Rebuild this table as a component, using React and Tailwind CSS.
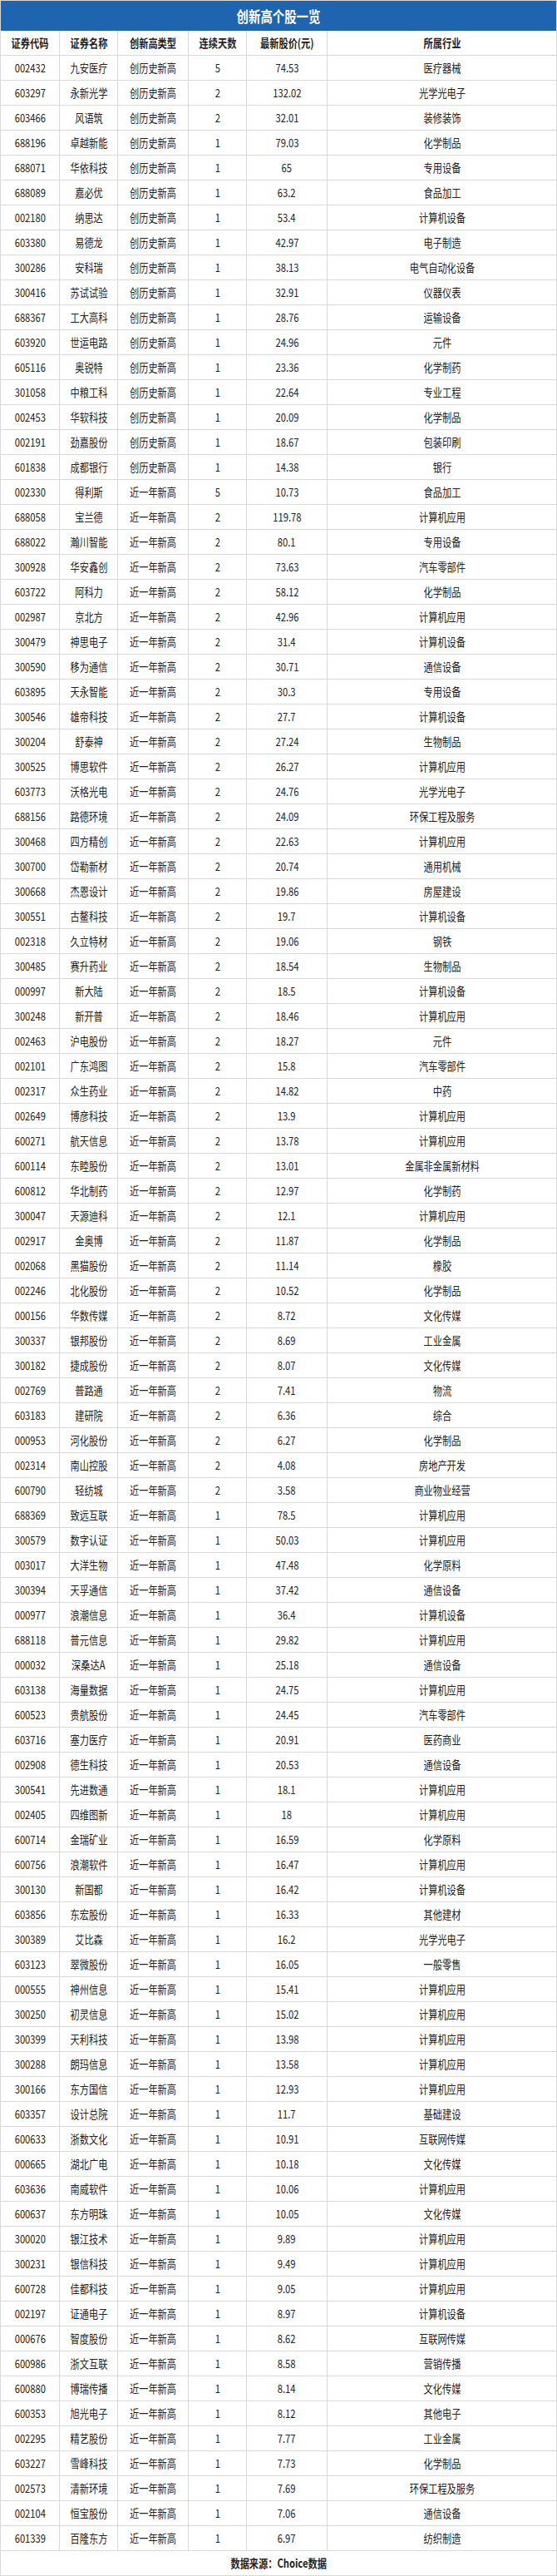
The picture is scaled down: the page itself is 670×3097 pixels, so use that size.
import React from "react";

const raw = `002432 九安医疗 创历史新高 5 74.53 医疗器械
603297 永新光学 创历史新高 2 132.02 光学光电子
603466 风语筑 创历史新高 2 32.01 装修装饰
688196 卓越新能 创历史新高 1 79.03 化学制品
688071 华依科技 创历史新高 1 65 专用设备
688089 嘉必优 创历史新高 1 63.2 食品加工
002180 纳思达 创历史新高 1 53.4 计算机设备
603380 易德龙 创历史新高 1 42.97 电子制造
300286 安科瑞 创历史新高 1 38.13 电气自动化设备
300416 苏试试验 创历史新高 1 32.91 仪器仪表
688367 工大高科 创历史新高 1 28.76 运输设备
603920 世运电路 创历史新高 1 24.96 元件
605116 奥锐特 创历史新高 1 23.36 化学制药
301058 中粮工科 创历史新高 1 22.64 专业工程
002453 华软科技 创历史新高 1 20.09 化学制品
002191 劲嘉股份 创历史新高 1 18.67 包装印刷
601838 成都银行 创历史新高 1 14.38 银行
002330 得利斯 近一年新高 5 10.73 食品加工
688058 宝兰德 近一年新高 2 119.78 计算机应用
688022 瀚川智能 近一年新高 2 80.1 专用设备
300928 华安鑫创 近一年新高 2 73.63 汽车零部件
603722 阿科力 近一年新高 2 58.12 化学制品
002987 京北方 近一年新高 2 42.96 计算机应用
300479 神思电子 近一年新高 2 31.4 计算机设备
300590 移为通信 近一年新高 2 30.71 通信设备
603895 天永智能 近一年新高 2 30.3 专用设备
300546 雄帝科技 近一年新高 2 27.7 计算机设备
300204 舒泰神 近一年新高 2 27.24 生物制品
300525 博思软件 近一年新高 2 26.27 计算机应用
603773 沃格光电 近一年新高 2 24.76 光学光电子
688156 路德环境 近一年新高 2 24.09 环保工程及服务
300468 四方精创 近一年新高 2 22.63 计算机应用
300700 岱勒新材 近一年新高 2 20.74 通用机械
300668 杰恩设计 近一年新高 2 19.86 房屋建设
300551 古鳌科技 近一年新高 2 19.7 计算机设备
002318 久立特材 近一年新高 2 19.06 钢铁
300485 赛升药业 近一年新高 2 18.54 生物制品
000997 新大陆 近一年新高 2 18.5 计算机设备
300248 新开普 近一年新高 2 18.46 计算机应用
002463 沪电股份 近一年新高 2 18.27 元件
002101 广东鸿图 近一年新高 2 15.8 汽车零部件
002317 众生药业 近一年新高 2 14.82 中药
002649 博彦科技 近一年新高 2 13.9 计算机应用
600271 航天信息 近一年新高 2 13.78 计算机应用
600114 东睦股份 近一年新高 2 13.01 金属非金属新材料
600812 华北制药 近一年新高 2 12.97 化学制药
300047 天源迪科 近一年新高 2 12.1 计算机应用
002917 金奥博 近一年新高 2 11.87 化学制品
002068 黑猫股份 近一年新高 2 11.14 橡胶
002246 北化股份 近一年新高 2 10.52 化学制品
000156 华数传媒 近一年新高 2 8.72 文化传媒
300337 银邦股份 近一年新高 2 8.69 工业金属
300182 捷成股份 近一年新高 2 8.07 文化传媒
002769 普路通 近一年新高 2 7.41 物流
603183 建研院 近一年新高 2 6.36 综合
000953 河化股份 近一年新高 2 6.27 化学制品
002314 南山控股 近一年新高 2 4.08 房地产开发
600790 轻纺城 近一年新高 2 3.58 商业物业经营
688369 致远互联 近一年新高 1 78.5 计算机应用
300579 数字认证 近一年新高 1 50.03 计算机应用
003017 大洋生物 近一年新高 1 47.48 化学原料
300394 天孚通信 近一年新高 1 37.42 通信设备
000977 浪潮信息 近一年新高 1 36.4 计算机设备
688118 普元信息 近一年新高 1 29.82 计算机应用
000032 深桑达A 近一年新高 1 25.18 通信设备
603138 海量数据 近一年新高 1 24.75 计算机应用
600523 贵航股份 近一年新高 1 24.45 汽车零部件
603716 塞力医疗 近一年新高 1 20.91 医药商业
002908 德生科技 近一年新高 1 20.53 通信设备
300541 先进数通 近一年新高 1 18.1 计算机应用
002405 四维图新 近一年新高 1 18 计算机应用
600714 金瑞矿业 近一年新高 1 16.59 化学原料
600756 浪潮软件 近一年新高 1 16.47 计算机应用
300130 新国都 近一年新高 1 16.42 计算机设备
603856 东宏股份 近一年新高 1 16.33 其他建材
300389 艾比森 近一年新高 1 16.2 光学光电子
603123 翠微股份 近一年新高 1 16.05 一般零售
000555 神州信息 近一年新高 1 15.41 计算机应用
300250 初灵信息 近一年新高 1 15.02 计算机应用
300399 天利科技 近一年新高 1 13.98 计算机应用
300288 朗玛信息 近一年新高 1 13.58 计算机应用
300166 东方国信 近一年新高 1 12.93 计算机应用
603357 设计总院 近一年新高 1 11.7 基础建设
600633 浙数文化 近一年新高 1 10.91 互联网传媒
000665 湖北广电 近一年新高 1 10.18 文化传媒
603636 南威软件 近一年新高 1 10.06 计算机应用
600637 东方明珠 近一年新高 1 10.05 文化传媒
300020 银江技术 近一年新高 1 9.89 计算机应用
300231 银信科技 近一年新高 1 9.49 计算机应用
600728 佳都科技 近一年新高 1 9.05 计算机应用
002197 证通电子 近一年新高 1 8.97 计算机设备
000676 智度股份 近一年新高 1 8.62 互联网传媒
600986 浙文互联 近一年新高 1 8.58 营销传播
600880 博瑞传播 近一年新高 1 8.14 文化传媒
600353 旭光电子 近一年新高 1 8.12 其他电子
002295 精艺股份 近一年新高 1 7.77 工业金属
603227 雪峰科技 近一年新高 1 7.73 化学制品
002573 清新环境 近一年新高 1 7.69 环保工程及服务
002104 恒宝股份 近一年新高 1 7.06 通信设备
601339 百隆东方 近一年新高 1 6.97 纺织制造`;

const rows = raw.split("\n").map((line) => line.trim().split(" "));
const headers = ["证券代码", "证券名称", "创新高类型", "连续天数", "最新股价(元)", "所属行业"];

function Row({ cells, bold }) {
  return (
    <div className="grid grid-cols-[71px_70px_85px_70px_97px_1fr] h-[30px] border-b border-[#d9d9d9]">
      {cells.map((c, i) => (
        <div
          key={i}
          className={
            "flex items-center justify-center overflow-visible whitespace-nowrap " +
            (i < 5 ? "border-r border-[#d9d9d9]" : "")
          }
        >
          <span className={"inline-block scale-x-80 text-[14px] " + (bold ? "font-bold" : "")}>{c}</span>
        </div>
      ))}
    </div>
  );
}

export default function App() {
  return (
    <div
      className="w-[670px] bg-white text-[#222]"
      style={{ fontFamily: '"Noto Sans CJK SC", "Noto Sans", sans-serif' }}
    >
      <div className="border-x border-[#d9d9d9]">
        <div className="h-[37px] bg-[#1f64ae] flex items-center justify-center border-t border-[#d9d9d9]">
          <span className="inline-block scale-x-80 text-[18px] font-bold text-white">创新高个股一览</span>
        </div>
        <Row cells={headers} bold />
        {rows.map((r, i) => (
          <Row key={i} cells={r} />
        ))}
        <div className="h-[30px] flex items-center justify-center border-b border-[#d9d9d9]">
          <span className="inline-block scale-x-80 text-[14px] font-bold">数据来源：Choice数据</span>
        </div>
      </div>
    </div>
  );
}
